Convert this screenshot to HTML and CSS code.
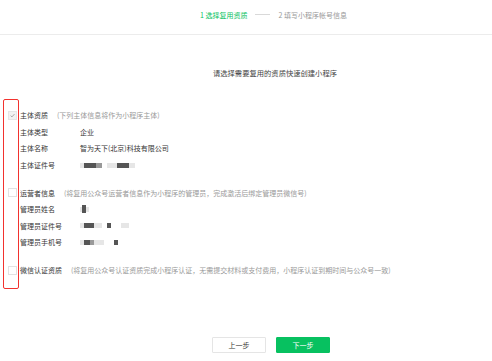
FILE: index.html
```html
<!DOCTYPE html>
<html lang="zh">
<head>
<meta charset="utf-8">
<link rel="stylesheet" href="styles.css">
</head>
<body>
<div class="page">
  <header class="steps">
    <div class="steps-inner">
      <span class="step active">1 选择复用资质</span>
      <span class="step-line"></span>
      <span class="step">2 填写小程序帐号信息</span>
    </div>
  </header>
  <h2 class="title">请选择需要复用的资质快速创建小程序</h2>
  <div class="form">
    <div class="mark"></div>
    <section class="group">
      <div class="row head"><span class="cb checked"><svg viewBox="0 0 10 10" width="9" height="9"><path d="M2.3 5.2 L4.2 7 L7.8 3" fill="none" stroke="#888" stroke-width="1"/></svg></span><span class="lbl">主体资质</span><span class="hint">(下列主体信息将作为小程序主体)</span></div>
      <div class="row"><span class="lbl">主体类型</span><span class="val">企业</span></div>
      <div class="row"><span class="lbl">主体名称</span><span class="val">智为天下(北京)科技有限公司</span></div>
      <div class="row"><span class="lbl">主体证件号</span><span class="val blur"><i class="b l w4"></i><i class="b d w12"></i><i class="b m w6"></i><i class="gap"></i><i class="b l w10"></i><i class="b d w12"></i><i class="b l w6"></i></span></div>
    </section>
    <section class="group">
      <div class="row head"><span class="cb"></span><span class="lbl">运营者信息</span><span class="hint">(将复用公众号运营者信息作为小程序的管理员，完成激活后绑定管理员微信号)</span></div>
      <div class="row"><span class="lbl">管理员姓名</span><span class="val blur"><i class="b l w2"></i><i class="b d w4 tall"></i><i class="b l w3"></i></span></div>
      <div class="row"><span class="lbl">管理员证件号</span><span class="val blur"><i class="b l w4"></i><i class="b d w10"></i><i class="b l w8"></i><i class="gap"></i><i class="b d w4"></i><i class="gap2"></i><i class="b l w8"></i></span></div>
      <div class="row"><span class="lbl">管理员手机号</span><span class="val blur"><i class="b l w4"></i><i class="b d w6"></i><i class="b m w4"></i><i class="b l w10"></i><i class="gap2"></i><i class="b d w4"></i></span></div>
    </section>
    <section class="group">
      <div class="row head"><span class="cb"></span><span class="lbl">微信认证资质</span><span class="hint">(将复用公众号认证资质完成小程序认证，无需提交材料或支付费用，小程序认证到期时间与公众号一致)</span></div>
    </section>
  </div>
  <div class="actions">
    <button class="btn">上一步</button>
    <button class="btn primary">下一步</button>
  </div>
</div>
</body>
</html>
```
FILE: styles.css
```css
* { box-sizing: border-box; }
html, body { margin: 0; padding: 0; background: #fff; }
body {
  font-family: "Noto Sans CJK SC", "Liberation Sans", sans-serif;
  font-size: 7px;
  color: #353535;
  width: 492px;
  height: 361px;
  overflow: hidden;
}
.page { display: flex; flex-direction: column; height: 361px; }
.steps {
  height: 35px;
  border-bottom: 1px solid #ececec;
  display: flex;
  align-items: center;
  padding-left: 200px;
  padding-bottom: 5px;
}
.steps-inner { display: flex; align-items: center; gap: 8px; }
.step { color: #999; font-size: 7px; }
.step.active { color: #07c160; }
.step-line { width: 15px; height: 1px; background: #d9d9d9; }
.title {
  margin: 33px 0 0 0;
  font-size: 7.3px;
  font-weight: normal;
  color: #444;
  text-align: center;
  padding-left: 58px;
  line-height: 10px;
}
.form {
  position: relative;
  margin-top: 29px;
  padding-left: 8px;
  display: flex;
  flex-direction: column;
  gap: 11px;
}
.mark {
  position: absolute;
  left: 3px;
  top: -8px;
  width: 16px;
  height: 190px;
  border: 1.5px solid #f2322e;
  border-radius: 2px;
}
.group { display: flex; flex-direction: column; }
.row {
  display: flex;
  align-items: center;
  height: 16.6px;
  padding-left: 12px;
}
.row.head { padding-left: 0; }
.cb {
  width: 9px;
  height: 9px;
  border: 1px solid #e2e2e2;
  background: #fff;
  margin-right: 3px;
  display: flex;
  align-items: center;
  justify-content: center;
}
.cb.checked { background: #f2f2f2; border-color: #e6e6e6; }
.cb svg { display: block; }
.lbl { width: 60px; flex: none; color: #353535; }
.head .lbl { width: auto; }
.hint { color: #999; margin-left: 9px; white-space: nowrap; }
.val { color: #353535; }
.blur { display: flex; align-items: center; filter: blur(0.6px); }
.b { display: block; height: 5px; }
.b.tall { height: 8px; }
.b.d { background: #555; }
.b.m { background: #999; }
.b.l { background: #e6e6e6; }
.w2 { width: 2px; } .w3 { width: 3px; } .w4 { width: 4px; } .w6 { width: 6px; }
.w8 { width: 8px; } .w10 { width: 10px; } .w12 { width: 12px; }
.gap { width: 5px; }
.gap2 { width: 10px; }
.actions {
  margin-top: auto;
  margin-bottom: 8px;
  display: flex;
  justify-content: center;
  gap: 10px;
  padding-left: 50px;
}
.btn {
  width: 54px;
  height: 16px;
  font-family: inherit;
  font-size: 7px;
  border: 1px solid #e5e5e5;
  background: #fff;
  color: #353535;
  border-radius: 1px;
  padding: 0;
}
.btn.primary { background: #07c160; border-color: #07c160; color: #fff; }
```
